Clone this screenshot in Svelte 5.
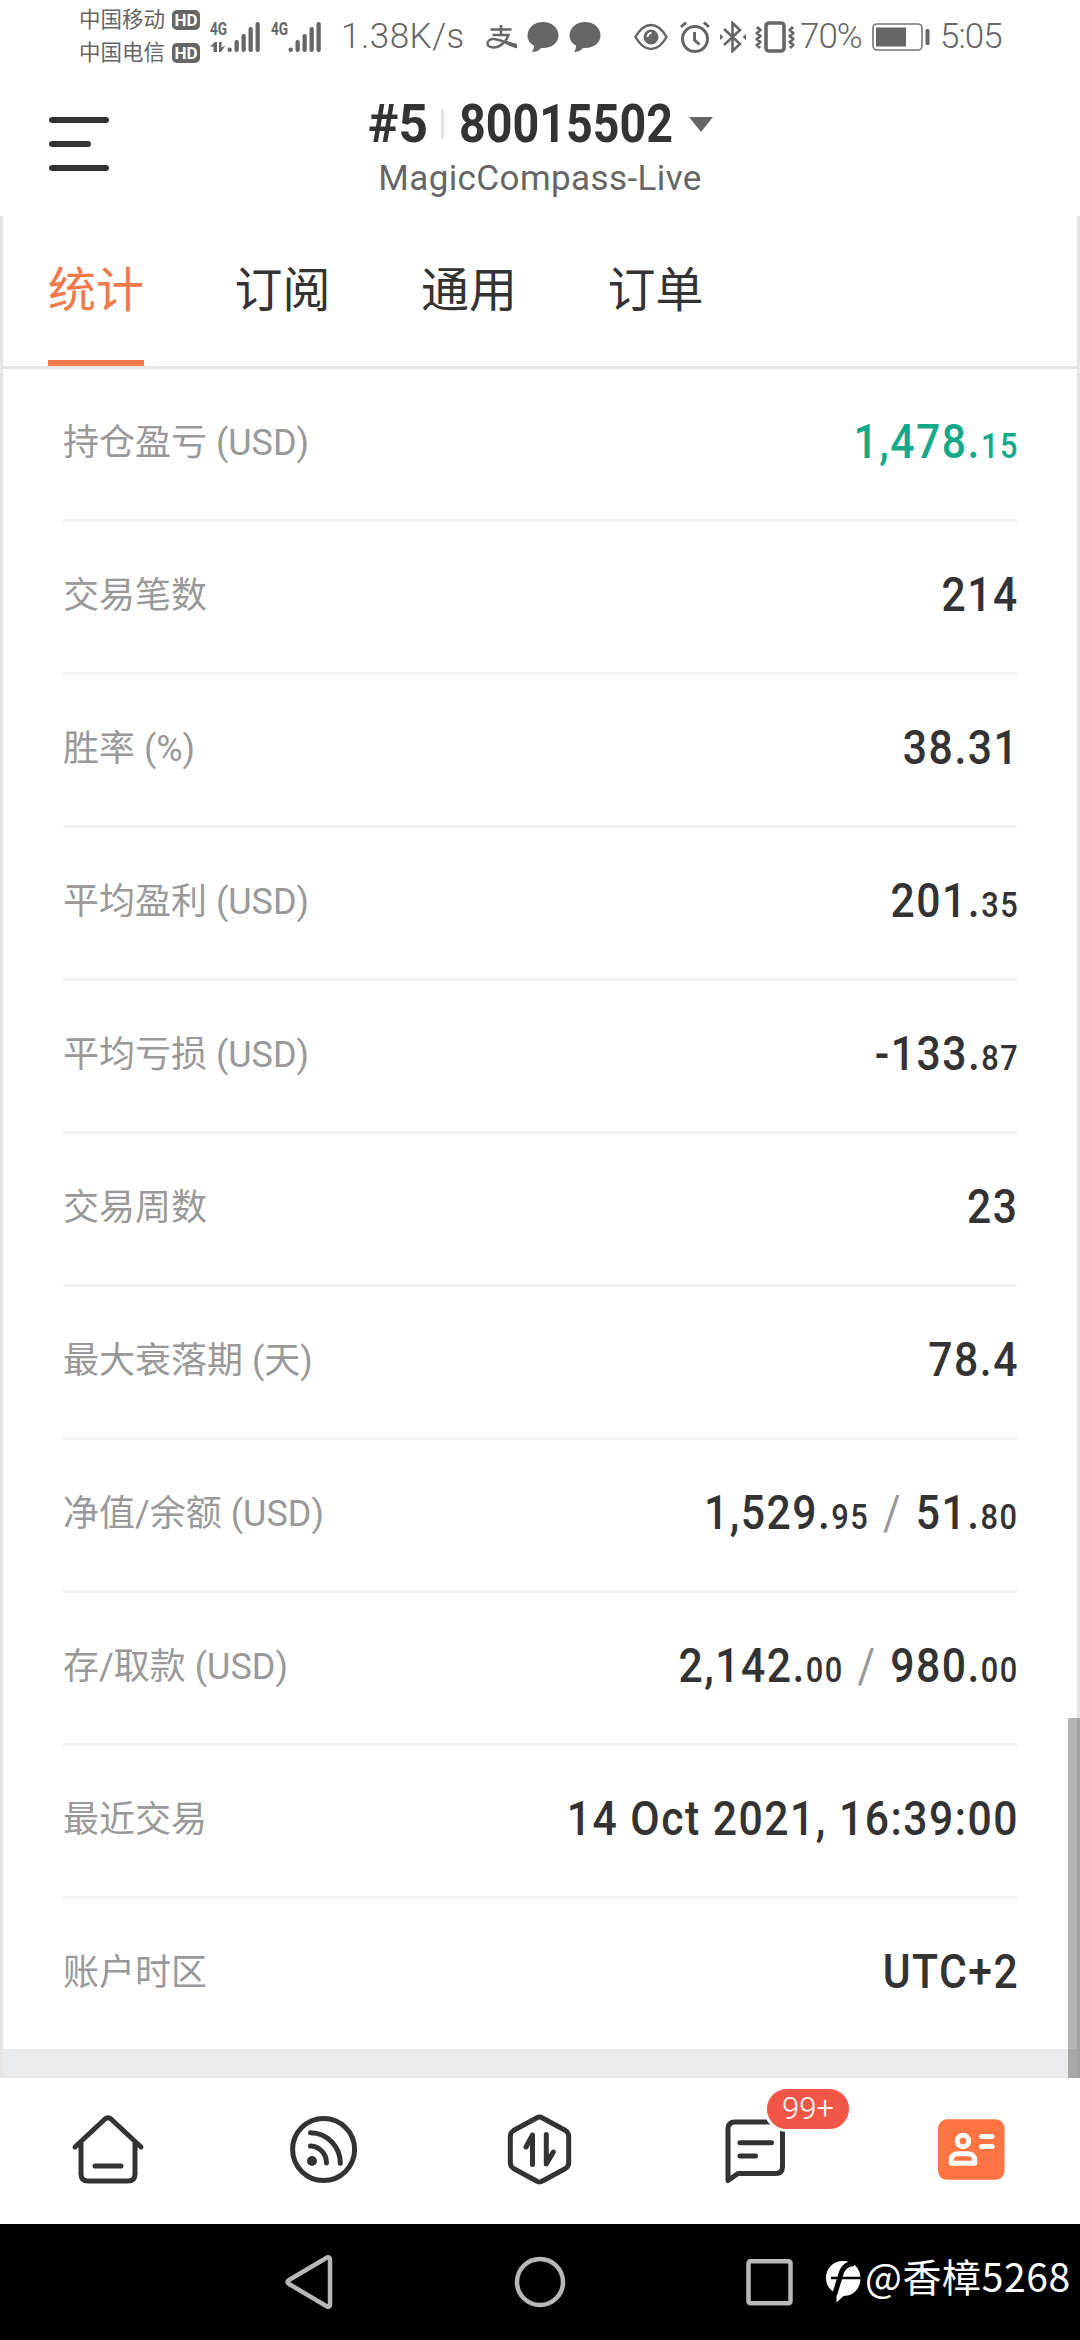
<script>
    const tabs = ['统计', '订阅', '通用', '订单'];
    let activeTab = 0;

    // each amount is [integer part, small decimals]
    const rows = [
        { label: '持仓盈亏 (USD)', amounts: [['1,478.', '15']], profit: true },
        { label: '交易笔数', amounts: [['214', '']] },
        { label: '胜率 (%)', amounts: [['38.31', '']] },
        { label: '平均盈利 (USD)', amounts: [['201.', '35']] },
        { label: '平均亏损 (USD)', amounts: [['-133.', '87']] },
        { label: '交易周数', amounts: [['23', '']] },
        { label: '最大衰落期 (天)', amounts: [['78.4', '']] },
        { label: '净值/余额 (USD)', amounts: [['1,529.', '95'], ['51.', '80']] },
        { label: '存/取款 (USD)', amounts: [['2,142.', '00'], ['980.', '00']] },
        { label: '最近交易', amounts: [['14 Oct 2021, 16:39:00', '']] },
        { label: '账户时区', amounts: [['UTC+2', '']] },
    ];

    const carriers = ['中国移动', '中国电信'];
</script>

<div class="screen">
    <div class="status">
        <div class="carriers">
            {#each carriers as name}
                <div class="carrier"><span>{name}</span><b class="hd">HD</b></div>
            {/each}
        </div>
        {#each [0, 1] as sim}
            <div class="signal">
                <span class="net">4G</span>
                <svg width="50" height="32" viewBox="0 0 50 32" fill="#666">
                    {#if sim === 0}
                        <path d="M0 25.500l5-4.500h2v10H3.500v-5.500zM9 21h2.500v5.500l4-2-4.500 6.500H9z" />
                    {/if}
                    <rect x="17.500" y="26.500" width="4.300" height="4.500" rx="2" />
                    <rect x="24.500" y="19" width="4.300" height="12" rx="2" />
                    <rect x="31.500" y="13" width="4.300" height="18" rx="2" />
                    <rect x="38.500" y="6" width="4.300" height="25" rx="2" />
                    <rect x="45.500" y="1" width="4.300" height="30" rx="2" />
                </svg>
            </div>
        {/each}
        <span class="speed">1.38K/s</span>
        <svg class="alipay" width="32" height="24" viewBox="0 0 32 24" fill="none" stroke="#666">
            <path d="M4.500 4.500h21M15 0v10" stroke-width="2.600" />
            <path d="M6.500 10h16c-2 6-8 12.500-15 12.500-4 0-6-2-6-4 0-3 3-4.500 6-4.500 6 0 13 4.500 23 6.500" stroke-width="2.400" />
            <path d="M20 15.500c3.500 1.500 7 2.700 11 3.500v4.500c-5-1.300-9-3.200-13-5.500z" fill="#666" stroke="none" />
        </svg>
        {#each [0, 1] as _}
            <svg class="bubble" width="32" height="32" viewBox="0 0 32 32" fill="#666">
                <path d="M16 1C7 1 .5 7 .5 14.500c0 4.500 2.500 8 6.500 10 0 3-1 5-2 6.500 4 0 7-1.500 9-4 10 1 17.500-5 17.500-12.500S25 1 16 1z" />
            </svg>
        {/each}
        <svg class="eye" width="34" height="28" viewBox="0 0 34 28" fill="none" stroke="#666" stroke-width="2.500">
            <path d="M1.500 14C6 6 11 2 17 2s11 4 15.500 12C28 22 23 26 17 26S6 22 1.500 14z" />
            <circle cx="17" cy="14" r="7.500" fill="#666" stroke="none" />
            <path d="M13.500 14a4 4 0 0 1 4-4" stroke="#fff" stroke-width="2" />
        </svg>
        <svg class="alarm" width="30" height="32" viewBox="0 0 30 32" fill="none" stroke="#666" stroke-width="3">
            <circle cx="15" cy="18" r="12.500" />
            <path d="M1 6l5-4.500M29 6l-5-4.500M14.500 11v8l5 4.500" />
        </svg>
        <svg class="bt" width="26" height="32" viewBox="0 0 26 32" fill="none" stroke="#666" stroke-width="2.600">
            <path d="M4 8l16 15-7.500 7V2L20 9 4 24" />
            <path d="M0 13l3.500 3L0 19zM26 13l-3.500 3 3.500 3z" fill="#666" stroke="none" />
        </svg>
        <svg class="vibrate" width="40" height="32" viewBox="0 0 40 32" fill="none" stroke="#666">
            <rect x="11" y="2" width="18" height="28" rx="3" stroke-width="3.600" />
            <path d="M2 6l3 3-3 3 3 3-3 3 3 3-3 3 3 3M38 6l-3 3 3 3-3 3 3 3-3 3 3 3-3 3" stroke-width="3" />
        </svg>
        <span class="percent">70%</span>
        <svg class="battery" width="58" height="28" viewBox="0 0 58 28">
            <rect x="1" y="1" width="49" height="26" rx="4" fill="none" stroke="#777" stroke-width="1.600" />
            <rect x="4" y="4.500" width="30" height="19" fill="#666" />
            <rect x="53.500" y="6" width="4" height="16" rx="1.500" fill="#666" />
        </svg>
        <span class="clock">5:05</span>
    </div>

    <header>
        <div class="menu"><i></i><i class="short"></i><i></i></div>
        <div class="account">
            <div class="title">
                <b class="rank">#5</b>
                <i class="sep"></i>
                <b class="number">80015502</b>
                <i class="caret"></i>
            </div>
            <div class="server">MagicCompass-Live</div>
        </div>
    </header>

    <main>
        <nav class="tabs">
            {#each tabs as tab, i}
                <button class="tab" class:active={i === activeTab} on:click={() => (activeTab = i)}>{tab}</button>
            {/each}
        </nav>
        <div class="rows">
            {#each rows as row}
                <div class="row">
                    <span class="label">{row.label}</span>
                    <span class="value" class:profit={row.profit}>
                        {#each row.amounts as [whole, cents], i}{#if i > 0}<span class="slash">/</span>{/if}{whole}{#if cents}<small>{cents}</small>{/if}{/each}
                    </span>
                </div>
            {/each}
        </div>
        <div class="scrollbar"></div>
    </main>

    <footer>
        <svg viewBox="0 0 216 146" class="icon">
            <path d="M75 69l30-28q3-2.500 6 0l30 28M81 64v32q0 7 7 7h40q7 0 7-7V64M95 88h26" />
        </svg>
        <svg viewBox="0 0 216 146" class="icon">
            <circle cx="107.600" cy="71.500" r="31" />
            <circle cx="96" cy="83" r="5" class="solid" />
            <path d="M94.500 68a16.500 17 0 0 1 16 17M94.500 54.700a30 30.500 0 0 1 29.800 30.500" />
        </svg>
        <svg viewBox="0 0 216 146" class="icon">
            <path d="M104.500 40q3-2 6 0l23 12.500q3.200 2 3.200 6v26q0 4-3.200 6l-23 12.500q-3 2-6 0l-23-12.500q-3.200-2-3.200-6v-26q0-4 3.200-6z" />
            <path d="M94 69l6.500-12v29.500M114.300 56.500V86l7-12" />
        </svg>
        <div class="messages">
            <svg viewBox="0 0 216 146" class="icon">
                <path d="M80 102.500V51q0-7 7-7h40.500q7 0 7 7v37.500q0 7-7 7H90zM92 64.700h31.500M92 78h15.500" />
            </svg>
            <span class="badge">99+</span>
        </div>
        <svg viewBox="0 0 216 146" class="icon card">
            <rect x="74" y="41.300" width="66.500" height="60.500" rx="9" fill="#ff7443" stroke="none" />
            <circle cx="99" cy="63" r="5.800" />
            <path d="M87.200 85.200v-2.500q0-7 7-7h9.500q7 0 7 7v2.500z" />
            <path d="M117.500 58.500h10.500M117.500 68.500h10.500" />
        </svg>
    </footer>

    <div class="system">
        <svg width="60" height="60" viewBox="0 0 60 60"><path d="M9 28l38-22.500q3-1 3 2v45q0 3-3 2L9 32q-3-2 0-4z" /></svg>
        <svg width="60" height="60" viewBox="0 0 60 60"><circle cx="30" cy="30" r="23" /></svg>
        <svg width="60" height="60" viewBox="0 0 60 60"><rect x="8.500" y="9.300" width="42" height="42" rx="2" /></svg>
        <div class="watermark">
            <svg width="36" height="44" viewBox="0 0 36 44">
                <path d="M18 1C8 1 1 8.500 1 18c0 6 2.500 10.500 7 13.500l3.500 1.500v9.500l7-6.500C29 36 35.500 28 35.500 18S28 1 18 1z" fill="#fff" stroke="none" />
                <path d="M29 3.500c-7 0-11.500 4-13.500 12L9.500 35" stroke="#000" stroke-width="5" />
                <path d="M6 18h30" stroke="#000" stroke-width="2.500" />
            </svg>
            <span>@香樟5268</span>
        </div>
    </div>
</div>

<style>
    :global(body) {
        margin: 0;
    }

    .screen {
        width: 1080px;
        height: 2340px;
        display: flex;
        flex-direction: column;
        background: #fff;
        color: #333;
        font-family: Roboto, "Noto Sans CJK SC", sans-serif;
        overflow: hidden;
    }

    svg {
        display: block;
        flex: none;
    }

    .status {
        height: 73px;
        box-sizing: border-box;
        padding-left: 79px;
        display: flex;
        align-items: center;
        color: #666;
        white-space: nowrap;
    }

    .carriers {
        width: 131px;
        display: flex;
        flex-direction: column;
        gap: 13px;
    }

    .carrier {
        display: flex;
        align-items: center;
        gap: 7px;
        height: 20px;
        font-size: 21.500px;
        line-height: 20px;
    }

    .hd {
        width: 28px;
        height: 20px;
        border-radius: 5px;
        background: #666;
        color: #fff;
        font-size: 17px;
        text-align: center;
    }

    .signal {
        position: relative;
        width: 50px;
        margin-right: 11px;
    }

    .net {
        position: absolute;
        left: 0;
        top: -1px;
        font-size: 19px;
        font-weight: 700;
        line-height: 18px;
        transform: scaleX(0.72);
        transform-origin: left;
    }

    .speed,
    .percent,
    .clock {
        font-size: 35px;
        font-weight: 350;
        line-height: 40px;
    }

    .speed {
        width: 145px;
        margin-left: 9px;
        letter-spacing: 0.5px;
    }

    .bubble {
        margin-left: 10px;
    }

    .alipay + .bubble {
        margin-left: 9px;
    }

    .eye {
        margin-left: 33px;
    }

    .alarm {
        margin-left: 12px;
    }

    .bt {
        margin-left: 10px;
    }

    .vibrate {
        margin-left: 9px;
    }

    .percent {
        width: 72px;
        margin-left: 5px;
        letter-spacing: -1px;
    }

    .clock {
        margin-left: 10px;
        letter-spacing: -1px;
    }

    header {
        height: 143px;
        display: flex;
        padding-left: 49px;
    }

    .menu {
        width: 60px;
        padding-top: 44px;
        display: flex;
        flex-direction: column;
        gap: 18px;
    }

    .menu i {
        height: 6px;
        border-radius: 3px;
        background: #333;
    }

    .menu .short {
        width: 42px;
    }

    .account {
        width: 862px;
        padding-top: 23px;
    }

    .title {
        display: flex;
        align-items: center;
        justify-content: center;
        height: 56px;
        font-size: 53px;
        line-height: 56px;
    }

    .title b {
        transform: scaleX(0.88);
        transform-origin: left;
    }

    .title .rank {
        width: 73px;
        transform: scaleX(0.97);
    }

    .sep {
        width: 3px;
        height: 30px;
        background: #e5e5e5;
    }

    .number {
        width: 230px;
        margin-left: 15px;
    }

    .caret {
        border: 12px solid transparent;
        border-top: 15px solid #666;
        border-bottom: 0;
    }

    .server {
        margin-top: 6px;
        color: #666;
        font-size: 35px;
        line-height: 42px;
        letter-spacing: 0.4px;
        text-align: center;
    }

    main {
        position: relative;
        height: 1862px;
        box-sizing: border-box;
        border: solid #e5e5e5;
        border-width: 0 3px;
        background: #eaebec;
    }

    .tabs {
        height: 150px;
        padding-left: 45px;
        display: flex;
        gap: 90.500px;
        border-bottom: 3px solid #e5e5e5;
        background: #fff;
    }

    .tab {
        padding: 0 0 3px;
        border: solid transparent;
        border-width: 0 0 6px;
        background: none;
        color: #333;
        font: 48px/141px "Noto Sans CJK SC", sans-serif;
    }

    .tab.active {
        color: #f3794a;
        border-color: #f3794a;
    }

    .rows {
        padding: 0 60px;
        background: #fff;
    }

    .row {
        display: flex;
        justify-content: space-between;
        height: 150px;
        line-height: 146px;
        border-bottom: 3px solid #f2f2f2;
        white-space: nowrap;
    }

    .row:last-child {
        border-bottom: 0;
    }

    .label {
        color: #999;
        font-size: 36px;
        line-height: 149px;
    }

    .value {
        margin-right: -2px;
        font-size: 48.500px;
        font-weight: 500;
        letter-spacing: 1.700px;
        transform: scaleX(0.88);
        transform-origin: right;
    }

    .value small {
        font-size: 35px;
    }

    .profit {
        color: #15a88a;
    }

    .slash {
        margin: 0 15.500px;
        color: #999;
        font-weight: 400;
    }

    .scrollbar {
        position: absolute;
        right: -3px;
        bottom: 0;
        width: 12px;
        height: 360px;
        background: rgba(0, 0, 0, 0.29);
    }

    footer {
        height: 146px;
        display: flex;
        background: #fff;
    }

    .icon {
        width: 216px;
        height: 146px;
        fill: none;
        stroke: #333;
        stroke-width: 5;
        stroke-linecap: round;
        stroke-linejoin: round;
    }

    .icon .solid {
        fill: #333;
        stroke: none;
    }

    .card {
        stroke: #fff;
    }

    .messages {
        position: relative;
    }

    .badge {
        position: absolute;
        left: 116px;
        top: 8px;
        width: 82px;
        height: 40px;
        border: 3px solid #fff;
        border-radius: 23px;
        background: #f25646;
        color: #fff;
        font-size: 31px;
        font-weight: 350;
        line-height: 40px;
        text-align: center;
    }

    .system {
        position: relative;
        height: 116px;
        display: grid;
        grid-template-columns: repeat(3, 230px);
        place-content: center;
        place-items: center;
        background: #000;
        fill: none;
        stroke: #b8b8b8;
        stroke-width: 4.500;
    }

    .watermark {
        position: absolute;
        left: 825px;
        top: 36px;
        display: flex;
        gap: 4px;
        color: #fff;
        font: 39px/30px "Noto Sans CJK SC", sans-serif;
        letter-spacing: 0.600px;
        white-space: nowrap;
    }
</style>
